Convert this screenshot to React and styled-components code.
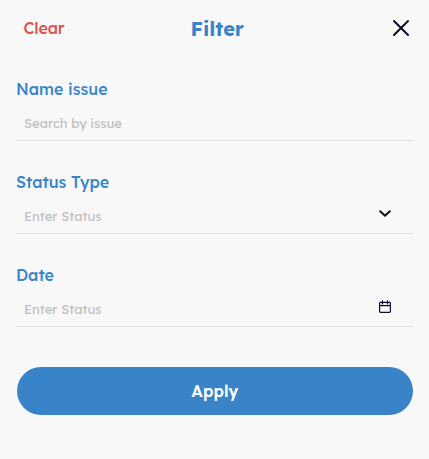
import React from "react";
import styled, { createGlobalStyle } from "styled-components";

const GlobalStyle = createGlobalStyle`
  * { box-sizing: border-box; }
  body { margin: 0; background: #f8f8f8; }
  button, input { border: 0; background: none; padding: 0; font-family: inherit; }
`;

const Panel = styled.main`
  min-height: 459px;
  padding: 0 16px;
  background: #f8f8f8;
  font-family: Lexend, Inter, "Open Sans", sans-serif;
`;

const Header = styled.header`
  display: grid;
  grid-template-columns: 1fr auto 1fr;
  align-items: center;
  height: 56px;
  padding: 0 0 0 7.5px;
`;

const ClearButton = styled.button`
  justify-self: start;
  color: #d9534f;
  font-size: 16px;
  font-weight: 500;
  line-height: 24px;
  letter-spacing: -0.1px;
`;

const Title = styled.h1`
  margin: 2px 2px 0 0;
  color: #3984c9;
  font-size: 20px;
  font-weight: 700;
  line-height: 28px;
`;

const CloseButton = styled.button`
  display: flex;
  justify-self: end;
`;

const Fields = styled.form`
  display: grid;
  gap: 29px;
  padding-top: 21px;
`;

const Field = styled.label`
  display: block;
  height: 64px;
  border-bottom: 1px solid #d8dddd;
`;

const Label = styled.span`
  display: block;
  color: #3984c9;
  font-size: 16px;
  font-weight: 500;
  line-height: 24px;
`;

const Control = styled.span`
  display: flex;
  align-items: center;
  height: 39px;
  padding: 4px 20px 0 8px;

  svg { margin-bottom: ${({ $iconLift }) => $iconLift}px; }
`;

const Input = styled.input`
  flex: 1;
  min-width: 0;
  height: 24px;
  outline: none;
  color: #333;
  font-size: 13px;
  &::placeholder { color: #bfbfbf; opacity: 1; }
`;

const ApplyButton = styled.button`
  display: block;
  width: 396px;
  height: 48px;
  margin: 40px 0 0 1px;
  && { background: #3984c9; }
  border-radius: 24px;
  color: #fff;
  font-size: 16px;
  font-weight: 600;
  line-height: 24px;
  letter-spacing: 0.15px;
`;

const CloseIcon = () => (
  <svg width="24" height="24" viewBox="0 0 24 24" fill="none" stroke="#0d0c2b" strokeWidth="2">
    <path d="M5 5 19 19M19 5 5 19" strokeLinecap="round" />
  </svg>
);

const ChevronIcon = () => (
  <svg width="16" height="16" viewBox="0 0 16 16" fill="none" stroke="#111" strokeWidth="2">
    <path d="m3.2 6.2 4.8 4.6 4.8-4.6" strokeLinecap="round" strokeLinejoin="round" />
  </svg>
);

const CalendarIcon = () => (
  <svg width="16" height="16" viewBox="0 0 16 16" fill="none" stroke="#0d0c2b" strokeWidth="1.2">
    <rect x="2.6" y="3.4" width="10.8" height="10" rx="0.8" />
    <path d="M2.6 6.6h10.8M5.5 1.9v3M10.5 1.9v3" strokeLinecap="round" />
  </svg>
);

const fields = [
  { label: "Name issue", placeholder: "Search by issue" },
  { label: "Status Type", placeholder: "Enter Status", icon: <ChevronIcon />, iconLift: 6 },
  { label: "Date", placeholder: "Enter Status", icon: <CalendarIcon />, iconLift: 4 },
];

export default function App() {
  return (
    <Panel>
      <GlobalStyle />
      <Header>
        <ClearButton type="button">Clear</ClearButton>
        <Title>Filter</Title>
        <CloseButton type="button" aria-label="Close"><CloseIcon /></CloseButton>
      </Header>
      <Fields>
        {fields.map(({ label, placeholder, icon, iconLift = 0 }) => (
          <Field key={label}>
            <Label>{label}</Label>
            <Control $iconLift={iconLift}>
              <Input placeholder={placeholder} />
              {icon}
            </Control>
          </Field>
        ))}
      </Fields>
      <ApplyButton type="button">Apply</ApplyButton>
    </Panel>
  );
}
